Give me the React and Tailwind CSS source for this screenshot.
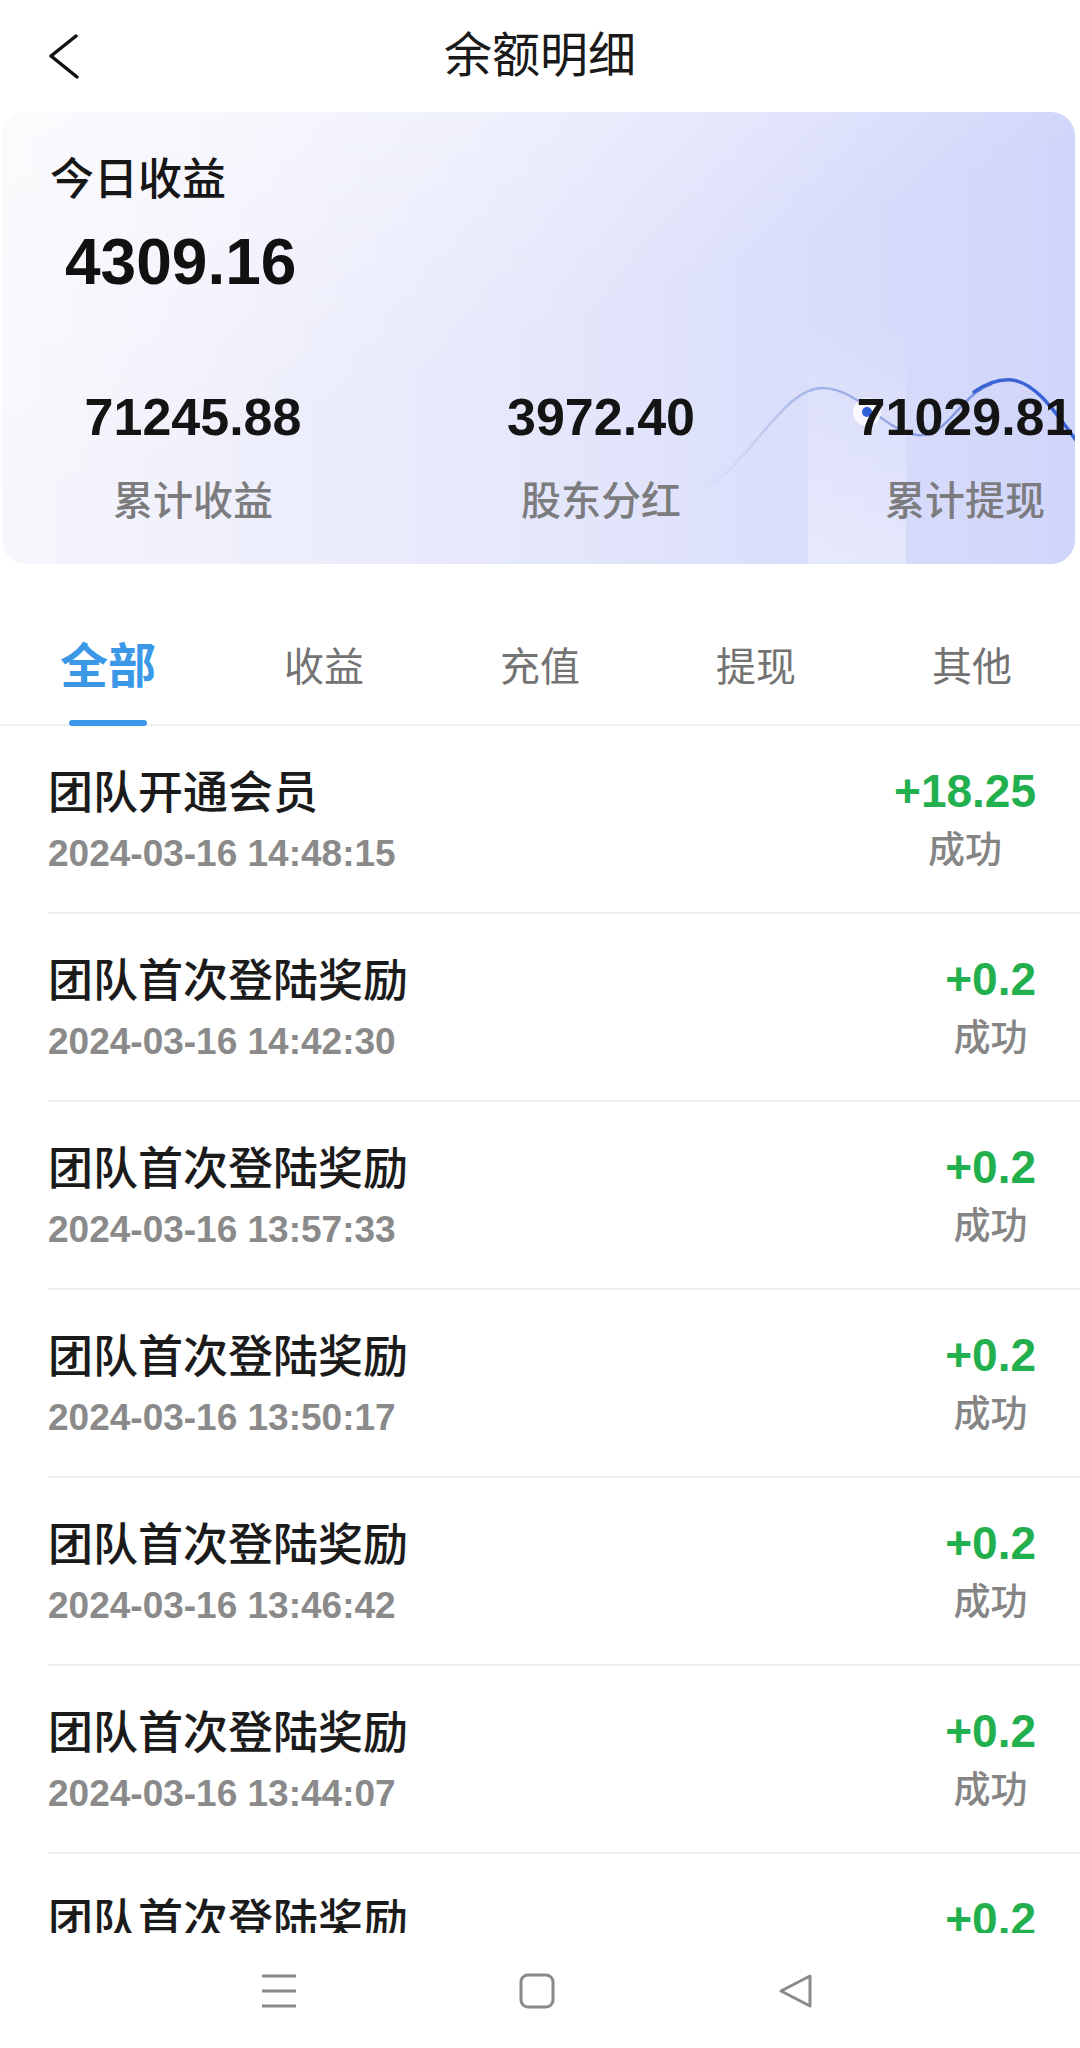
import React from "react";

const records = [
  { title: "团队开通会员", time: "2024-03-16 14:48:15", amount: "+18.25" },
  { title: "团队首次登陆奖励", time: "2024-03-16 14:42:30", amount: "+0.2" },
  { title: "团队首次登陆奖励", time: "2024-03-16 13:57:33", amount: "+0.2" },
  { title: "团队首次登陆奖励", time: "2024-03-16 13:50:17", amount: "+0.2" },
  { title: "团队首次登陆奖励", time: "2024-03-16 13:46:42", amount: "+0.2" },
  { title: "团队首次登陆奖励", time: "2024-03-16 13:44:07", amount: "+0.2" },
  { title: "团队首次登陆奖励", time: "2024-03-16 13:40:51", amount: "+0.2" },
];

const tabs = ["全部", "收益", "充值", "提现", "其他"];

const stats = [
  { value: "71245.88", label: "累计收益" },
  { value: "3972.40", label: "股东分红" },
  { value: "71029.81", label: "累计提现" },
];

const font = "font-['Liberation_Sans','Noto_Sans_CJK_SC',sans-serif]";

export default function App() {
  return (
    <div className={`w-[1080px] h-[2048px] bg-white flex flex-col overflow-hidden ${font}`}>
      <div className="h-[1933px] overflow-hidden">
        {/* Header */}
        <div className="h-[112px] grid grid-cols-[1fr_auto_1fr] items-center">
          <div className="pl-[46px] pb-[2px]">
            <svg width="36" height="48" viewBox="0 0 36 48" fill="none">
              <path d="M30 5 L5 25 L31 46" stroke="#111" strokeWidth="3.5" strokeLinecap="round" strokeLinejoin="round" />
            </svg>
          </div>
          <div className="text-[48px] leading-[56px] text-[#1a1a1a]">余额明细</div>
          <div />
        </div>

        {/* Summary card */}
        <div className="relative ml-[2px] mr-[5px] h-[452px] rounded-[24px] overflow-hidden bg-linear-to-r from-[#f6f6fc] via-[#e5e7fb] to-[#d0d5fa]">
          <div className="absolute inset-0 bg-linear-[160deg] from-white/60 via-white/0 to-transparent" />
          <div className="absolute left-[806px] top-[210px] w-[98px] h-[242px] bg-linear-to-b from-white/0 to-white/35" />
          <svg className="absolute inset-0" width="1073" height="452" viewBox="0 0 1073 452" fill="none">
            <defs>
              <linearGradient id="wv" x1="690" y1="0" x2="960" y2="0" gradientUnits="userSpaceOnUse">
                <stop offset="0" stopColor="#c9d1f2" stopOpacity="0" />
                <stop offset="0.4" stopColor="#a9b8ea" />
                <stop offset="1" stopColor="#7f95df" />
              </linearGradient>
            </defs>
            <path d="M680 385 C 740 375, 775 275, 821 276 C 858 277, 880 318, 915 323 C 945 327, 958 282, 990 272" stroke="url(#wv)" strokeWidth="2.5" />
            <path d="M972 280 C 985 271, 997 267, 1010 268 C 1036 271, 1056 305, 1080 336" stroke="#3a64d6" strokeWidth="3.5" strokeLinecap="round" />
            <circle cx="865" cy="300" r="14" fill="#ffffff" fillOpacity="0.8" />
            <circle cx="865" cy="300" r="5" fill="#3160d8" />
          </svg>

          <div className="relative pt-[40px] pl-[48px]">
            <div className="text-[44px] leading-[56px] font-medium text-[#161616]">今日收益</div>
            <div className="mt-[16px] ml-[15px] text-[64px] leading-[76px] font-bold text-[#111]">4309.16</div>
          </div>
          <div className="relative mt-[85px] grid grid-cols-[382px_434px_294px]">
            {stats.map((s) => (
              <div key={s.label} className="flex flex-col items-center whitespace-nowrap">
                <div className="text-[52px] leading-[64px] font-bold text-[#141414]">{s.value}</div>
                <div className="mt-[26px] text-[40px] leading-[52px] font-medium text-[#7c7c7f]">{s.label}</div>
              </div>
            ))}
          </div>
        </div>

        {/* Tabs */}
        <div className="h-[162px] grid grid-cols-5 border-b-2 border-[#f2f2f4]">
          {tabs.map((t, i) => (
            <div key={t} className="flex flex-col items-center pt-[73px]">
              {i === 0 ? (
                <>
                  <div className="text-[48px] leading-[60px] font-semibold text-[#3a98e6]">{t}</div>
                  <div className="mt-[23px] w-[78px] h-[6px] rounded-full bg-[#3a98e6]" />
                </>
              ) : (
                <div className="text-[40px] leading-[60px] text-[#737373]">{t}</div>
              )}
            </div>
          ))}
        </div>

        {/* Records */}
        <div className="flex flex-col">
          {records.map((r, i) => (
            <div key={i} className="ml-[48px] pr-[44px] h-[188px] border-b-2 border-[#f0f0f2] flex justify-between">
              <div className="pt-[40px]">
                <div className="text-[45px] leading-[56px] font-medium text-[#1b1b1b]">{r.title}</div>
                <div className="mt-[8px] text-[37px] leading-[48px] font-bold text-[#8a8a8a]">{r.time}</div>
              </div>
              <div className="pt-[40px] flex flex-col items-center">
                <div className="text-[46px] leading-[50px] font-bold text-[#22b04f]">{r.amount}</div>
                <div className="mt-[11px] text-[37px] leading-[48px] font-medium text-[#858585]">成功</div>
              </div>
            </div>
          ))}
        </div>
      </div>

      {/* System nav bar */}
      <div className="h-[115px] bg-white flex items-center pl-[261px] gap-[222px]">
        <svg width="36" height="36" viewBox="0 0 36 36" fill="none">
          <path d="M1 3 H35 M1 18 H35 M1 33 H35" stroke="#8a8a8a" strokeWidth="3" />
        </svg>
        <svg width="36" height="36" viewBox="0 0 36 36" fill="none">
          <rect x="2" y="2" width="32" height="32" rx="7" stroke="#8a8a8a" strokeWidth="3" />
        </svg>
        <svg width="36" height="36" viewBox="0 0 36 36" fill="none">
          <path d="M33 3 L4 18 L33 33 Z" stroke="#8a8a8a" strokeWidth="3" strokeLinejoin="round" />
        </svg>
      </div>
    </div>
  );
}
